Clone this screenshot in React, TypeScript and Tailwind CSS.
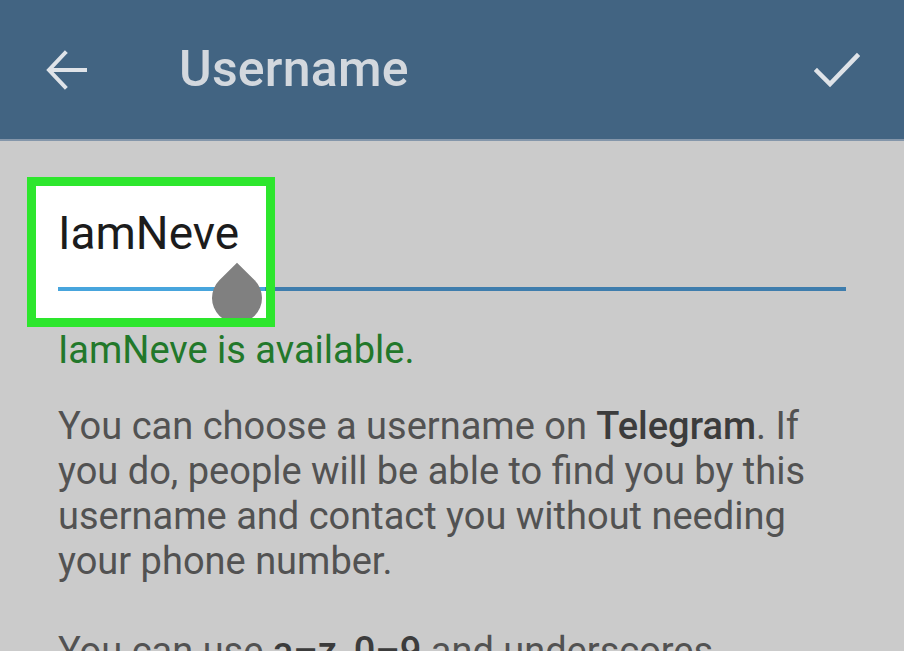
import React from "react";

function BackArrow() {
  return (
    <svg width="44" height="44" viewBox="0 0 44 44" fill="none" stroke="#dfe3e8" strokeWidth="4" strokeLinecap="square">
      <path d="M40 22H5" />
      <path d="M20 5L4 22l16 17" />
    </svg>
  );
}

function CheckMark() {
  return (
    <svg width="46" height="36" viewBox="0 0 46 36" fill="none" stroke="#dfe3e8" strokeWidth="4.5" strokeLinecap="square">
      <path d="M3 19l13 13L43 4" />
    </svg>
  );
}

export default function App() {
  return (
    <div className="w-[904px] h-[651px] overflow-hidden bg-[#cbcbcb] font-['Roboto','Liberation_Sans',sans-serif]">
      {/* Toolbar */}
      <header className="h-[141px] bg-[#426482] border-b-2 border-[#8496aa] flex items-center pl-[45px] pr-[44px]">
        <BackArrow />
        <h1 className="ml-[90px] text-[50px] font-medium text-[#d3d8de] tracking-[0.2px]">Username</h1>
        <div className="ml-auto">
          <CheckMark />
        </div>
      </header>

      {/* Content */}
      <main className="relative px-[58px]">
        {/* highlight box background */}
        <div className="absolute left-[27px] top-[36px] w-[248px] h-[150px] bg-white" />

        <div className="relative pt-[70px]">
          <div className="h-[45px] leading-[45px] text-[46px] text-[#1c1c1c]">IamNeve</div>
          <div className="mt-[31px] flex h-[4px] w-[788px]">
            <div className="w-[207px] bg-[#47a5dd]" />
            <div className="flex-1 bg-[#3e7dad]" />
          </div>
          {/* cursor handle */}
          <div className="absolute left-[154px] top-[132px] w-[50px] h-[50px] rounded-full rounded-tr-none -rotate-45 bg-[#808080]" />
        </div>

        {/* green highlight frame */}
        <div className="absolute left-[27px] top-[36px] w-[248px] h-[150px] border-[9px] border-[#2de62d]" />

        <p className="mt-[39px] h-[40px] leading-[40px] text-[38px] text-[#22782a]">IamNeve is available.</p>

        <div className="mt-[34px] text-[38px] leading-[45px] text-[#525252] w-[780px]">
          <p>
            You can choose a username on <span className="font-medium text-[#3c3c3c]">Telegram</span>. If you do, people will be able to find you by this username and contact you without needing your phone number.
          </p>
          <p className="mt-[45px]">
            You can use <span className="font-medium text-[#3c3c3c]">a–z</span>, <span className="font-medium text-[#3c3c3c]">0–9</span> and underscores. Minimum length is <span className="font-medium text-[#3c3c3c]">5</span> characters.
          </p>
        </div>
      </main>
    </div>
  );
}
